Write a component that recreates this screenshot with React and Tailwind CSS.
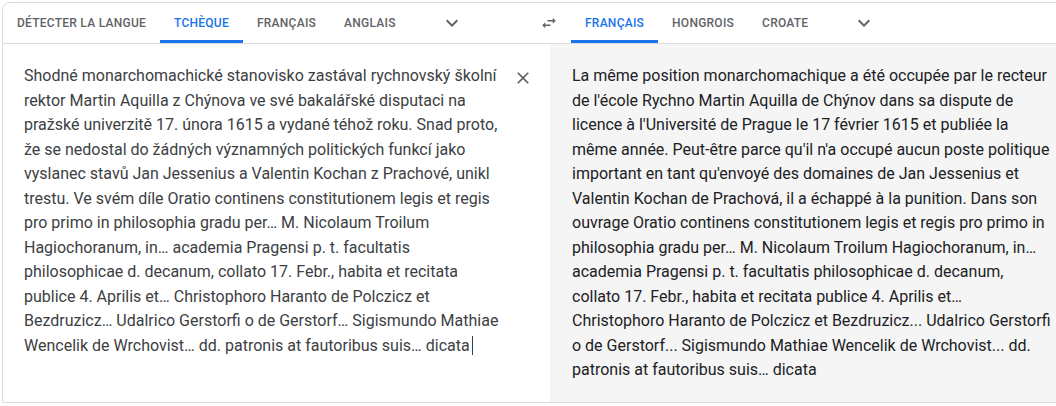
import React from 'react';

const sourceText =
  'Shodné monarchomachické stanovisko zastával rychnovský školní rektor Martin Aquilla z Chýnova ve své bakalářské disputaci na pražské univerzitě 17. února 1615 a vydané téhož roku. Snad proto, že se nedostal do žádných významných politických funkcí jako vyslanec stavů Jan Jessenius a Valentin Kochan z Prachové, unikl trestu. Ve svém díle Oratio continens constitutionem legis et regis pro primo in philosophia gradu per… M. Nicolaum Troilum Hagiochoranum, in… academia Pragensi p. t. facultatis philosophicae d. decanum, collato 17. Febr., habita et recitata publice 4. Aprilis et… Christophoro Haranto de Polczicz et Bezdruzicz… Udalrico Gerstorfi o de Gerstorf… Sigismundo Mathiae Wencelik de Wrchovist… dd. patronis at fautoribus suis… dicata';

const targetText =
  "La même position monarchomachique a été occupée par le recteur de l'école Rychno Martin Aquilla de Chýnov dans sa dispute de licence à l'Université de Prague le 17 février 1615 et publiée la même année. Peut-être parce qu'il n'a occupé aucun poste politique important en tant qu'envoyé des domaines de Jan Jessenius et Valentin Kochan de Prachová, il a échappé à la punition. Dans son ouvrage Oratio continens constitutionem legis et regis pro primo in philosophia gradu per… M. Nicolaum Troilum Hagiochoranum, in… academia Pragensi p. t. facultatis philosophicae d. decanum, collato 17. Febr., habita et recitata publice 4. Aprilis et… Christophoro Haranto de Polczicz et Bezdruzicz... Udalrico Gerstorfi o de Gerstorf... Sigismundo Mathiae Wencelik de Wrchovist... dd. patronis at fautoribus suis… dicata";

const Chevron = () => (
  <svg width="24" height="24" viewBox="0 0 24 24" fill="#5f6368">
    <path d="M16.59 8.59L12 13.17 7.41 8.59 6 10l6 6 6-6z" />
  </svg>
);

const Tab = ({ label, active }) => (
  <button
    className={`relative h-full px-[14px] text-[12px] font-medium uppercase tracking-[0.25px] ${
      active ? 'text-[#1a73e8]' : 'text-[#5f6368]'
    }`}
  >
    {label}
    {active && <span className="absolute left-0 right-0 bottom-0 h-[3px] bg-[#1a73e8]" />}
  </button>
);

const App = () => {
  return (
    <div
      className="w-[1056px] h-[406px] overflow-hidden bg-white pt-[2px] pl-[2px]"
      style={{ fontFamily: 'Roboto, "Noto Sans", Arial, sans-serif' }}
    >
      <div className="w-[1070px] h-[401px] border border-[#dadce0] rounded-tl-[8px] flex flex-col">
        {/* language bar */}
        <div className="h-[41px] flex border-b border-[#dadce0]">
          <div className="w-[524px] flex items-stretch">
            <Tab label="Détecter la langue" />
            <Tab label="Tchèque" active />
            <Tab label="Français" />
            <Tab label="Anglais" />
            <button className="ml-[30px] flex items-center">
              <Chevron />
            </button>
          </div>
          <button className="w-[44px] flex items-center justify-center">
            <svg width="18" height="18" viewBox="0 0 24 24" fill="#5f6368">
              <path d="M6.99 11L3 15l3.99 4v-3H14v-2H6.99v-3zM21 9l-3.99-4v3H10v2h7.01v3L21 9z" />
            </svg>
          </button>
          <div className="flex-1 flex items-stretch">
            <Tab label="Français" active />
            <Tab label="Hongrois" />
            <Tab label="Croate" />
            <button className="ml-[30px] flex items-center">
              <Chevron />
            </button>
          </div>
        </div>

        {/* panels */}
        <div className="flex-1 flex">
          <div className="w-[547px] flex pl-[21px] pt-[20px]">
            <p className="w-[482px] text-[16px] leading-[24.5px] text-[#3c4043]">
              {sourceText}
              <span className="inline-block w-[1px] h-[19px] bg-[#3c4043] ml-[2px] align-[-4px]" />
            </p>
            <button className="ml-[7px] h-[24px] mt-[2px] flex items-center">
              <svg width="20" height="20" viewBox="0 0 24 24" fill="#5f6368">
                <path d="M19 6.41L17.59 5 12 10.59 6.41 5 5 6.41 10.59 12 5 17.59 6.41 19 12 13.41 17.59 19 19 17.59 13.41 12z" />
              </svg>
            </button>
          </div>
          <div className="flex-1 bg-[#f5f5f5] pl-[22px] pt-[20px]">
            <p className="w-[482px] text-[16px] leading-[24.5px] text-[#202124]">{targetText}</p>
          </div>
        </div>
      </div>
    </div>
  );
};

export default App;
